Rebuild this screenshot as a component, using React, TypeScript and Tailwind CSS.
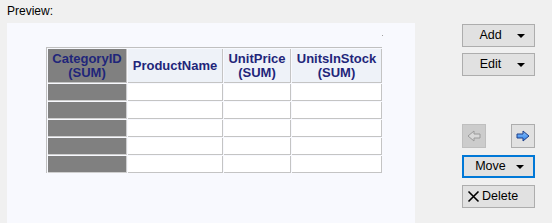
import React from 'react'

const font = { fontFamily: '"Liberation Sans", Arial, sans-serif' }

function Caret() {
  return (
    <svg width="8" height="4" viewBox="0 0 8 4" className="absolute right-[9px] top-1/2 -translate-y-1/2">
      <polygon points="0,0 8,0 4,4" fill="#000" />
    </svg>
  )
}

function DropButton({ label, focused }: { label: string; focused?: boolean }) {
  return (
    <button
      className={
        'relative flex h-[23px] w-[73px] items-center justify-center bg-[#e1e1e1] pr-[16px] text-[12.5px] text-black ' +
        (focused ? 'border-2 border-[#0078d7]' : 'border border-[#adadad]')
      }
    >
      <span>{label}</span>
      <Caret />
    </button>
  )
}

function ArrowButton({ dir, disabled }: { dir: 'left' | 'right'; disabled?: boolean }) {
  const pts =
    dir === 'left'
      ? '1,6 7,1 7,4 13,4 13,8 7,8 7,11'
      : '13,6 7,1 7,4 1,4 1,8 7,8 7,11'
  return (
    <button
      className={
        'flex h-[24px] w-[24px] items-center justify-center border ' +
        (disabled ? 'border-[#bfbfbf] bg-[#cccccc]' : 'border-[#adadad] bg-[#e1e1e1]')
      }
    >
      <svg width="14" height="12" viewBox="0 0 14 12">
        <defs>
          <linearGradient id="blu" x1="0" y1="0" x2="0" y2="1">
            <stop offset="0" stopColor="#8cc4ff" />
            <stop offset="1" stopColor="#2d7fe6" />
          </linearGradient>
        </defs>
        <polygon
          points={pts}
          fill={disabled ? '#d9d9d9' : 'url(#blu)'}
          stroke={disabled ? '#9a9a9a' : '#1d3f8a'}
          strokeWidth="1"
          strokeLinejoin="miter"
        />
      </svg>
    </button>
  )
}

const cols = ['CategoryID\n(SUM)', 'ProductName', 'UnitPrice\n(SUM)', 'UnitsInStock\n(SUM)']

export default function App() {
  return (
    <div className="flex h-[223px] w-[552px] bg-[#f0f0f0]" style={font}>
      {/* Preview area */}
      <div className="flex w-[415px] flex-col pl-[7px]">
        <div className="h-[23px] pt-[4px] text-[12px] leading-[15px] text-black">Preview:</div>
        <div className="relative flex-1 bg-[#f8f9fe] pl-[39px] pt-[24px]">
          <div className="absolute left-[375px] top-[12px] h-[1px] w-[1px] bg-[#a0a0a0]" />
          <div className="grid w-fit grid-cols-[79px_95px_67px_90px] gap-[1px] border-l border-t border-[#c0c0c0] p-[1px] pb-0 pr-0">
            {cols.map((c, i) => (
              <div
                key={c}
                className={
                  'flex h-[34px] items-center justify-center whitespace-pre-line border-b border-r border-[#c4c4c4] text-center text-[13px] font-bold leading-[14px] text-[#1f267a] ' +
                  (i === 0 ? 'bg-[#808080]' : 'bg-[#eef2f8]')
                }
              >
                {c}
              </div>
            ))}
            {[0, 1, 2, 3, 4].map((r) =>
              [0, 1, 2, 3].map((i) => (
                <div
                  key={r + '-' + i}
                  className={
                    'h-[17px] border-b border-r ' +
                    (i === 0 ? 'border-[#cfcfcf] bg-[#808080]' : 'border-[#c4c4c4] bg-white')
                  }
                />
              ))
            )}
          </div>
        </div>
      </div>

      {/* Buttons */}
      <div className="flex flex-col pl-[47px] pt-[24px]">
        <DropButton label="Add" />
        <div className="h-[6px]" />
        <DropButton label="Edit" />
        <div className="mt-[48px] flex justify-between">
          <ArrowButton dir="left" disabled />
          <ArrowButton dir="right" />
        </div>
        <div className="mt-[7px]">
          <DropButton label="Move" focused />
        </div>
        <button className="mt-[7px] flex h-[23px] w-[73px] items-center gap-[2px] border border-[#adadad] bg-[#e1e1e1] pl-[4px] text-[12.5px] text-black">
          <svg width="13" height="13" viewBox="0 0 13 13">
            <path d="M1.5 1.5 L11.5 11.5 M11.5 1.5 L1.5 11.5" stroke="#000" strokeWidth="1.6" />
          </svg>
          <span>Delete</span>
        </button>
      </div>
    </div>
  )
}
